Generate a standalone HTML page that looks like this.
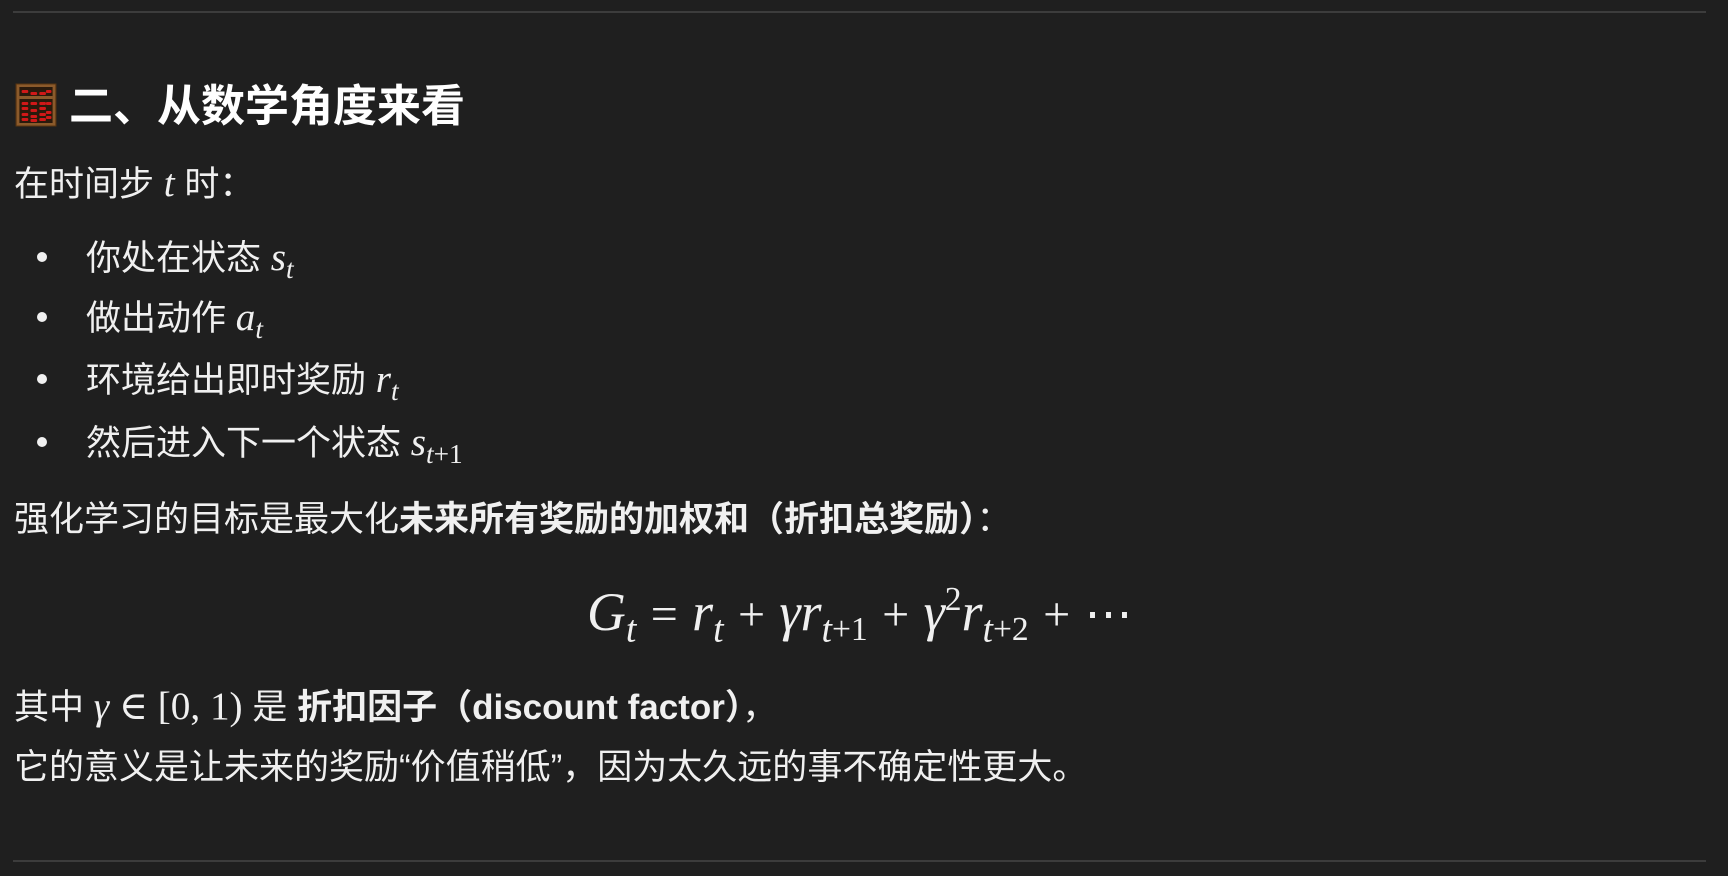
<!DOCTYPE html>
<html><head><meta charset="utf-8"><style>
body{margin:0;width:1728px;height:876px;background:#1f1f1f;color:#f0f0f0;font-family:"Liberation Sans","Noto Sans CJK SC",sans-serif;overflow:hidden;position:relative}
.l{position:absolute;white-space:nowrap;font-size:35px;line-height:40px}
.hr{position:absolute;left:13px;width:1693px;height:2px;background:#3c3c3c}
i,.m{font-family:"Liberation Serif","DejaVu Serif",serif}
i{font-style:italic}
.l>i,.l>.m{font-size:1.12em}
sub{font-size:0.7em;vertical-align:-0.3em;line-height:0}
sup{font-size:0.7em;vertical-align:0.6em;line-height:0}
.dot{position:absolute;left:37px;width:10px;height:10px;border-radius:50%;background:#f0f0f0}
b{font-weight:bold}
.op{margin:0 0.3em}
</style></head><body>
<div class="hr" style="top:11px"></div>
<div style="position:absolute;left:15px;top:83px">
<svg width="42" height="44" viewBox="0 0 38 44" preserveAspectRatio="none" style="display:block">
<rect x="1" y="1" width="36" height="42" fill="#8b5a2b" stroke="#5a3510"/>
<rect x="4" y="4" width="30" height="36" fill="#2a1a0c"/>
<rect x="4" y="13" width="30" height="3" fill="#8b5a2b"/>
<g fill="#d01818">
<rect x="6" y="7" width="6" height="3" rx="1"/><rect x="14" y="9" width="6" height="3" rx="1"/><rect x="22" y="9" width="6" height="3" rx="1"/><rect x="28" y="7" width="5" height="3" rx="1"/>
<rect x="6" y="19" width="6" height="3" rx="1"/><rect x="14" y="19" width="6" height="3" rx="1"/><rect x="22" y="19" width="6" height="3" rx="1"/><rect x="28" y="19" width="5" height="3" rx="1"/>
<rect x="6" y="24" width="6" height="3" rx="1"/><rect x="14" y="26" width="6" height="3" rx="1"/><rect x="22" y="24" width="6" height="3" rx="1"/><rect x="28" y="28" width="5" height="3" rx="1"/>
<rect x="6" y="30" width="6" height="3" rx="1"/><rect x="14" y="32" width="6" height="3" rx="1"/><rect x="22" y="30" width="6" height="3" rx="1"/><rect x="28" y="33" width="5" height="3" rx="1"/>
<rect x="6" y="35" width="6" height="3" rx="1"/><rect x="14" y="36" width="6" height="3" rx="1"/><rect x="22" y="35" width="6" height="3" rx="1"/>
</g></svg></div>
<div class="l" style="left:69px;top:82px;font-size:44px;line-height:50px;font-weight:bold;color:#fff">二、从数学角度来看</div>
<div class="l" style="left:14px;top:164px">在时间步 <i>t</i> 时：</div>
<div class="dot" style="top:252px"></div><div class="l" style="left:86px;top:238px">你处在状态 <i>s<sub>t</sub></i></div>
<div class="dot" style="top:312px"></div><div class="l" style="left:86px;top:298px">做出动作 <i>a<sub>t</sub></i></div>
<div class="dot" style="top:374px"></div><div class="l" style="left:86px;top:360px">环境给出即时奖励 <i>r<sub>t</sub></i></div>
<div class="dot" style="top:437px"></div><div class="l" style="left:86px;top:423px">然后进入下一个状态 <i>s<sub>t</sub></i><sub class="m" style="font-size:0.78em">+1</sub></div>
<div class="l" style="left:14px;top:500px">强化学习的目标是最大化<b>未来所有奖励的加权和（折扣总奖励）</b>：</div>
<div class="l m" style="left:587px;top:586px;font-size:48px;line-height:52px"><i>G<sub>t</sub></i><span class="op">=</span><i>r<sub>t</sub></i><span class="op">+</span><i>γr<sub>t</sub></i><sub>+1</sub><span class="op">+</span><i>γ</i><sup>2</sup><i>r<sub>t</sub></i><sub>+2</sub><span class="op">+</span>⋯</div>
<div class="l" style="left:14px;top:687px">其中 <i>γ</i> <span class="m">∈ [0, 1)</span> 是 <b>折扣因子（discount factor）</b>，</div>
<div class="l" style="left:14px;top:748px">它的意义是让未来的奖励“价值稍低”，因为太久远的事不确定性更大。</div>
<div class="hr" style="top:860px"></div>
</body></html>
